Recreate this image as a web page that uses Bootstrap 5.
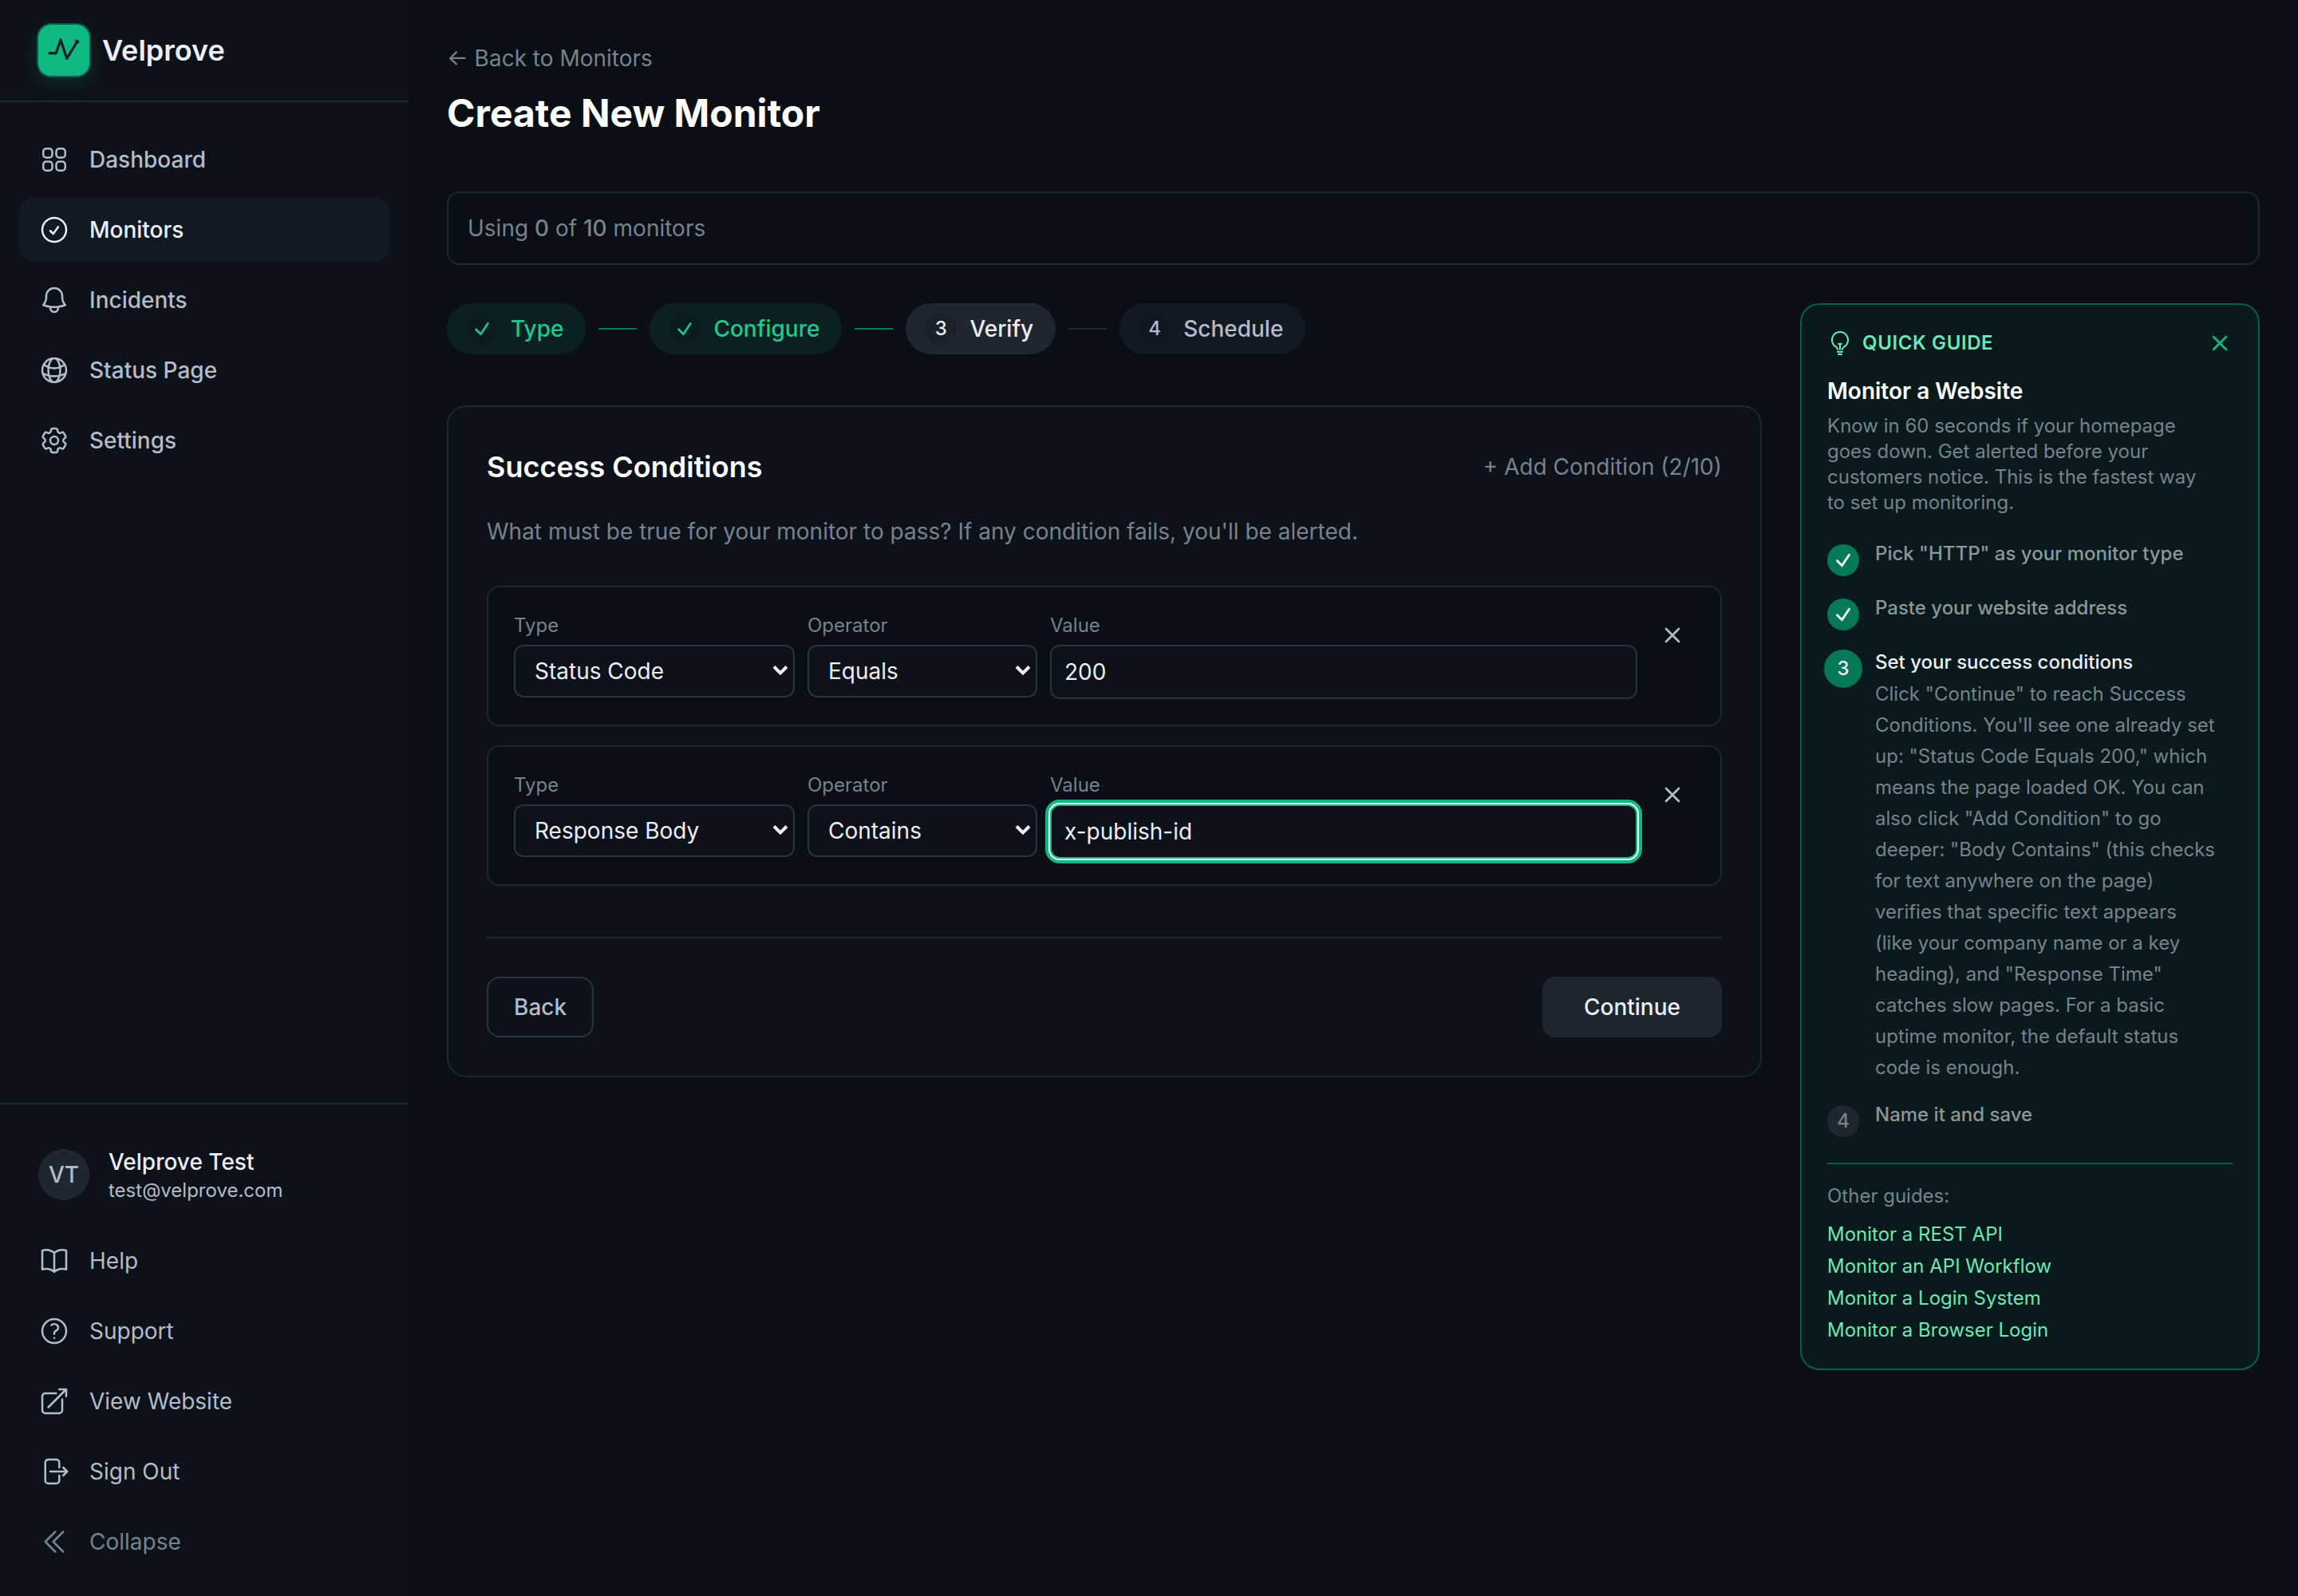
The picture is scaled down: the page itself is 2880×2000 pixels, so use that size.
<!DOCTYPE html>
<html lang="en" data-bs-theme="dark">
<head>
<meta charset="utf-8">
<meta name="viewport" content="width=device-width, initial-scale=1">
<title>Create New Monitor – Velprove</title>
<link href="https://cdn.jsdelivr.net/npm/bootstrap@5.3.0/dist/css/bootstrap.min.css" rel="stylesheet">
<style>
:root{
  --page:#0a0e15; --panel:#0d1119; --raised:#121922; --solid:#1e262f;
  --line:#1e262f; --line-strong:#2a333e;
  --ink:#eceef8; --ink-2:#b4bcc9; --ink-3:#77828f;
  --green:#10b981; --green-soft:#6ee7b7; --green-deep:#047857; --green-line:#065f46;
}
body{background:var(--page);color:var(--ink);font-family:Inter,"Liberation Sans",sans-serif;font-size:28px;line-height:40px}
a{text-decoration:none}
svg{flex:none;display:block}
.ico{fill:none;stroke:currentColor;stroke-width:1.5;stroke-linecap:round;stroke-linejoin:round;width:40px;height:40px}
.ico-sm{width:32px;height:32px}
.ico-x{stroke-width:2}
.ico-check{width:24px;height:24px;stroke-width:2.5}
.txt-sm{font-size:24px;line-height:32px}
.w-mid{font-weight:500}
.ink-2{color:var(--ink-2)} .ink-3{color:var(--ink-3)}

.sidebar{width:512px;flex:none;background:var(--panel)}
.brand{height:128px;padding:0 48px;gap:16px;border-bottom:2px solid var(--line);font-size:36px;font-weight:600;color:var(--ink)}
.brand-logo{width:64px;height:64px;border-radius:16px;background:var(--green);color:#0b2423;box-shadow:0 0 0 2px rgba(16,185,129,.4),0 8px 24px rgba(16,185,129,.2)}
.side-nav{padding:32px 24px;gap:8px}
.side-nav .nav-link,.side-foot .nav-link{height:80px;padding:0 24px;gap:24px;border-radius:16px;color:var(--ink-2);font-weight:500}
.side-nav .nav-link.active{background:var(--raised);color:var(--ink)}
.side-foot{padding:52px 24px 28px;border-top:2px solid var(--line)}
.side-foot .nav-link{font-weight:400}
.side-foot .nav-link.ink-3{color:var(--ink-3)}
.side-user{padding:0 24px 32px;gap:24px}
.avatar{width:64px;height:64px;background:var(--solid)}

.page-main{padding:48px}
.back-line{font-size:32px;line-height:48px}
.back-line a{font-size:28px;line-height:40px}
h1{font-size:48px;line-height:60px;font-weight:700;margin:16px 0 68px}
.usage{border:2px solid var(--line);border-radius:16px;padding:24px;margin-bottom:48px}
.columns{gap:48px}
.steps{gap:16px;margin-bottom:64px}
.step{height:64px;padding:0 28px 0 24px;gap:16px;font-weight:500;background:var(--raised);color:var(--ink-2)}
.step.done{background:#0b2022;color:#1ccb8c}
.step.now{background:var(--solid);color:var(--ink)}
.step-dot{width:40px;height:40px;background:rgba(10,14,20,.2);font-size:24px}
.step-line{width:48px;height:2px;background:var(--line)}
.step-line.done{background:var(--green-deep)}

.panel{background:var(--panel);border:2px solid var(--line);border-radius:24px;padding:48px}
.panel-head{margin-bottom:34px}
.panel-head .btn{font-size:28px;line-height:40px}
.panel h2{font-size:36px;line-height:54px;font-weight:600;margin:0}
.cond{background:var(--page);border:2px solid var(--line);border-radius:16px;padding:32px;gap:16px}
.cond label{display:block;margin-bottom:8px;color:var(--ink-3)}
.cond .form-select,.cond .form-control{background-color:var(--panel);border:2px solid var(--line-strong);border-radius:12px;color:var(--ink);font-size:28px;line-height:40px}
.cond .form-select{height:66px;padding:0 56px 0 24px;background-position:right 6px center;background-size:20px 20px;
  background-image:url("data:image/svg+xml,%3Csvg xmlns='http://www.w3.org/2000/svg' viewBox='0 0 20 20'%3E%3Cpath d='M2 4.5l8 8 8-8' fill='none' stroke='%23eceef8' stroke-width='4'/%3E%3C/svg%3E")}
.cond .form-control{height:68px;padding:0 16px}
.cond .form-control.focused,.cond .form-control:focus{border-color:var(--green);box-shadow:0 0 0 2px #ecfdf5,0 0 0 6px var(--green)}
.f-type{width:352px}.f-op{width:288px}
.icon-btn{width:56px;height:56px;padding:12px;border:0;color:var(--ink-2)}
.panel-foot{border-top:2px solid var(--line);margin-top:64px;padding-top:48px}
.panel-foot .btn{height:76px;border-radius:16px;border:2px solid var(--line-strong);padding:0 32px;font-size:28px;font-weight:500;color:var(--ink-2)}
.panel-foot .btn-go{background:var(--solid);border:0;padding:0 52px;color:var(--ink)}

.guide{width:576px;flex:none;background:#081a1c;border:2px solid var(--green-line);border-radius:24px;padding:32px}
.guide h3{font-size:28px;line-height:40px;font-weight:600;margin:24px 0 8px}
.guide-tag{gap:12px;color:var(--green-soft);font-weight:600;letter-spacing:.6px}
.guide-close{color:var(--green)}
.guide-intro{padding-right:24px}
.guide ol{gap:24px;margin:32px 0}
.guide li{gap:20px}
.guide-dot{width:40px;height:40px;margin-top:4px;background:var(--green-deep);color:var(--ink);font-weight:500}
.guide-dot .ico-check{stroke-width:3}
.guide-dot.now-dot{transform:scale(1.2);font-size:20px}
.guide-dot.todo{background:var(--solid);color:var(--ink-3)}
.guide-name{font-weight:500;color:#8d9699}
.guide-name.current{color:var(--ink)}
.guide-text{line-height:39px;margin-top:4px;padding-right:16px}
.guide-more{border-top:2px solid var(--green-line);padding-top:24px}
.guide-more a{color:var(--green-soft)}
</style>
</head>
<body>
<div class="d-flex min-vh-100">
  <aside class="sidebar d-flex flex-column">
    <a href="#" class="brand d-flex align-items-center">
      <span class="brand-logo d-flex align-items-center justify-content-center">
        <svg width="64" height="64" viewBox="0 0 64 64" fill="none" stroke="currentColor" stroke-width="3.2" stroke-linecap="round" stroke-linejoin="round"><path d="M14 35.700h8.300l5.700-17 7.700 23.600 12.800-20.800"/><circle cx="48.500" cy="21.300" r="1" fill="currentColor"/></svg>
      </span>
      Velprove
    </a>
    <nav class="side-nav nav flex-column">
      <a href="#" class="nav-link d-flex align-items-center"><svg class="ico" viewBox="0 0 24 24"><path d="M3.750 6A2.250 2.250 0 0 1 6 3.750h2.250A2.250 2.250 0 0 1 10.500 6v2.250a2.250 2.250 0 0 1-2.250 2.250H6a2.250 2.250 0 0 1-2.250-2.250V6ZM3.750 15.750A2.250 2.250 0 0 1 6 13.500h2.250a2.250 2.250 0 0 1 2.250 2.250V18a2.250 2.250 0 0 1-2.250 2.250H6A2.250 2.250 0 0 1 3.750 18v-2.250ZM13.500 6a2.250 2.250 0 0 1 2.250-2.250H18A2.250 2.250 0 0 1 20.250 6v2.250A2.250 2.250 0 0 1 18 10.500h-2.250a2.250 2.250 0 0 1-2.250-2.250V6ZM13.500 15.750a2.250 2.250 0 0 1 2.250-2.250H18a2.250 2.250 0 0 1 2.250 2.250V18A2.250 2.250 0 0 1 18 20.250h-2.250A2.250 2.250 0 0 1 13.500 18v-2.250Z"/></svg>Dashboard</a>
      <a href="#" class="nav-link active d-flex align-items-center" aria-current="page"><svg class="ico" viewBox="0 0 24 24"><path d="M9 12.750 11.250 15 15 9.750M21 12a9 9 0 1 1-18 0 9 9 0 0 1 18 0Z"/></svg>Monitors</a>
      <a href="#" class="nav-link d-flex align-items-center"><svg class="ico" viewBox="0 0 24 24"><path d="M14.857 17.082a23.848 23.848 0 0 0 5.454-1.310A8.967 8.967 0 0 1 18 9.750V9A6 6 0 0 0 6 9v.750a8.967 8.967 0 0 1-2.312 6.022c1.733.640 3.560 1.085 5.455 1.310m5.714 0a24.255 24.255 0 0 1-5.714 0m5.714 0a3 3 0 1 1-5.714 0"/></svg>Incidents</a>
      <a href="#" class="nav-link d-flex align-items-center"><svg class="ico" viewBox="0 0 24 24"><path d="M12 21a9.004 9.004 0 0 0 8.716-6.747M12 21a9.004 9.004 0 0 1-8.716-6.747M12 21c2.485 0 4.500-4.030 4.500-9S14.485 3 12 3m0 18c-2.485 0-4.500-4.030-4.500-9S9.515 3 12 3m0 0a8.997 8.997 0 0 1 7.843 4.582M12 3a8.997 8.997 0 0 0-7.843 4.582m15.686 0A11.953 11.953 0 0 1 12 10.500c-2.998 0-5.740-1.100-7.843-2.918m15.686 0A8.959 8.959 0 0 1 21 12c0 .778-.099 1.533-.284 2.253m0 0A17.919 17.919 0 0 1 12 16.500c-3.162 0-6.133-.815-8.716-2.247m0 0A9.015 9.015 0 0 1 3 12c0-1.605.420-3.113 1.157-4.418"/></svg>Status Page</a>
      <a href="#" class="nav-link d-flex align-items-center"><svg class="ico" viewBox="0 0 24 24"><path d="M9.594 3.940c.090-.542.560-.940 1.110-.940h2.593c.550 0 1.020.398 1.110.940l.213 1.281c.063.374.313.686.645.870.074.040.147.083.220.127.325.196.720.257 1.075.124l1.217-.456a1.125 1.125 0 0 1 1.370.490l1.296 2.247a1.125 1.125 0 0 1-.260 1.431l-1.003.827c-.293.241-.438.613-.430.992a7.723 7.723 0 0 1 0 .255c-.008.378.137.750.430.991l1.004.827c.424.350.534.955.260 1.430l-1.298 2.247a1.125 1.125 0 0 1-1.369.491l-1.217-.456c-.355-.133-.750-.072-1.076.124a6.470 6.470 0 0 1-.220.128c-.331.183-.581.495-.644.869l-.213 1.281c-.090.543-.560.940-1.110.940h-2.594c-.550 0-1.019-.398-1.110-.940l-.213-1.281c-.062-.374-.312-.686-.644-.870a6.520 6.520 0 0 1-.220-.127c-.325-.196-.720-.257-1.076-.124l-1.217.456a1.125 1.125 0 0 1-1.369-.490l-1.297-2.247a1.125 1.125 0 0 1 .260-1.431l1.004-.827c.292-.240.437-.613.430-.991a6.932 6.932 0 0 1 0-.255c.007-.380-.138-.751-.430-.992l-1.004-.827a1.125 1.125 0 0 1-.260-1.430l1.297-2.247a1.125 1.125 0 0 1 1.370-.491l1.216.456c.356.133.751.072 1.076-.124.072-.044.146-.086.220-.128.332-.183.582-.495.644-.869l.214-1.280Z"/><path d="M15 12a3 3 0 1 1-6 0 3 3 0 0 1 6 0Z"/></svg>Settings</a>
    </nav>
    <div class="side-foot mt-auto">
      <div class="side-user d-flex align-items-center">
        <span class="avatar rounded-circle d-flex align-items-center justify-content-center w-mid ink-2">VT</span>
        <div><div class="w-mid">Velprove Test</div><div class="txt-sm ink-2">test@velprove.com</div></div>
      </div>
      <nav class="nav flex-column gap-2">
        <a href="#" class="nav-link d-flex align-items-center"><svg class="ico" viewBox="0 0 24 24"><path d="M12 6.042A8.967 8.967 0 0 0 6 3.750c-1.052 0-2.062.180-3 .512v14.250A8.987 8.987 0 0 1 6 18c2.305 0 4.408.867 6 2.292m0-14.250a8.966 8.966 0 0 1 6-2.292c1.052 0 2.062.180 3 .512v14.250A8.987 8.987 0 0 0 18 18a8.967 8.967 0 0 0-6 2.292m0-14.250v14.250"/></svg>Help</a>
        <a href="#" class="nav-link d-flex align-items-center"><svg class="ico" viewBox="0 0 24 24"><path d="M9.879 7.519c1.171-1.025 3.071-1.025 4.242 0 1.172 1.025 1.172 2.687 0 3.712-.203.179-.430.326-.670.442-.745.361-1.450.999-1.450 1.827v.750M21 12a9 9 0 1 1-18 0 9 9 0 0 1 18 0Zm-9 5.250h.008v.008H12v-.008Z"/></svg>Support</a>
        <a href="#" class="nav-link d-flex align-items-center"><svg class="ico" viewBox="0 0 24 24"><path d="M13.500 6H5.250A2.250 2.250 0 0 0 3 8.250v10.500A2.250 2.250 0 0 0 5.250 21h10.500A2.250 2.250 0 0 0 18 18.750V10.500m-10.500 6L21 3m0 0h-5.250M21 3v5.250"/></svg>View Website</a>
        <a href="#" class="nav-link d-flex align-items-center"><svg class="ico" viewBox="0 0 24 24"><path d="M15.750 9V5.250A2.250 2.250 0 0 0 13.500 3h-6a2.250 2.250 0 0 0-2.250 2.250v13.500A2.250 2.250 0 0 0 7.500 21h6a2.250 2.250 0 0 0 2.250-2.250V15m3 0 3-3m0 0-3-3m3 3H9"/></svg>Sign Out</a>
        <a href="#" class="nav-link ink-3 d-flex align-items-center"><svg class="ico" viewBox="0 0 24 24"><path d="m18.750 4.500-7.500 7.500 7.500 7.500m-6-15L5.250 12l7.500 7.500"/></svg>Collapse</a>
      </nav>
    </div>
  </aside>

  <main class="page-main flex-grow-1">
    <div class="back-line"><a href="#" class="ink-3">← Back to Monitors</a></div>
    <h1>Create New Monitor</h1>
    <div class="usage ink-3">Using <span class="w-mid">0</span> of <span class="w-mid">10</span> monitors</div>

    <div class="columns d-flex align-items-start">
      <div class="flex-grow-1">
        <div class="steps d-flex align-items-center">
          <div class="step done rounded-pill d-flex align-items-center"><span class="step-dot rounded-circle d-flex align-items-center justify-content-center"><svg class="ico ico-check" viewBox="0 0 24 24"><path d="m4.500 12.750 6 6 9-13.500"/></svg></span>Type</div>
          <span class="step-line done"></span>
          <div class="step done rounded-pill d-flex align-items-center"><span class="step-dot rounded-circle d-flex align-items-center justify-content-center"><svg class="ico ico-check" viewBox="0 0 24 24"><path d="m4.500 12.750 6 6 9-13.500"/></svg></span>Configure</div>
          <span class="step-line done"></span>
          <div class="step now rounded-pill d-flex align-items-center"><span class="step-dot rounded-circle d-flex align-items-center justify-content-center">3</span>Verify</div>
          <span class="step-line"></span>
          <div class="step rounded-pill d-flex align-items-center"><span class="step-dot rounded-circle d-flex align-items-center justify-content-center">4</span>Schedule</div>
        </div>

        <section class="panel">
          <div class="panel-head d-flex align-items-center justify-content-between">
            <h2>Success Conditions</h2>
            <button type="button" class="btn p-0 border-0 ink-3">+ Add Condition (2/10)</button>
          </div>
          <p class="ink-3 mb-5">What must be true for your monitor to pass? If any condition fails, you'll be alerted.</p>
          <div class="d-flex flex-column gap-4">
            <div class="cond d-flex align-items-start">
              <div class="f-type"><label class="txt-sm" for="type1">Type</label><select id="type1" class="form-select"><option>Status Code</option></select></div>
              <div class="f-op"><label class="txt-sm" for="op1">Operator</label><select id="op1" class="form-select"><option>Equals</option></select></div>
              <div class="flex-grow-1"><label class="txt-sm" for="val1">Value</label><input id="val1" type="text" class="form-control" value="200"></div>
              <button type="button" class="btn icon-btn" aria-label="Remove condition"><svg class="ico ico-sm ico-x" viewBox="0 0 24 24"><path d="M6 18 18 6M6 6l12 12"/></svg></button>
            </div>
            <div class="cond d-flex align-items-start">
              <div class="f-type"><label class="txt-sm" for="type2">Type</label><select id="type2" class="form-select"><option>Response Body</option></select></div>
              <div class="f-op"><label class="txt-sm" for="op2">Operator</label><select id="op2" class="form-select"><option>Contains</option></select></div>
              <div class="flex-grow-1"><label class="txt-sm" for="val2">Value</label><input id="val2" type="text" class="form-control focused" value="x-publish-id"></div>
              <button type="button" class="btn icon-btn" aria-label="Remove condition"><svg class="ico ico-sm ico-x" viewBox="0 0 24 24"><path d="M6 18 18 6M6 6l12 12"/></svg></button>
            </div>
          </div>
          <div class="panel-foot d-flex justify-content-between">
            <button type="button" class="btn">Back</button>
            <button type="button" class="btn btn-go">Continue</button>
          </div>
        </section>
      </div>

      <aside class="guide txt-sm">
        <div class="d-flex align-items-center justify-content-between">
          <div class="guide-tag d-flex align-items-center"><svg class="ico ico-sm" viewBox="0 0 24 24"><path d="M12 18v-5.250m0 0a6.010 6.010 0 0 0 1.500-.189m-1.500.189a6.010 6.010 0 0 1-1.500-.189m3.750 7.478a12.060 12.060 0 0 1-4.500 0m3.750 2.383a14.406 14.406 0 0 1-3 0M14.250 18v-.192c0-.983.658-1.823 1.508-2.316a7.500 7.500 0 1 0-7.517 0c.850.493 1.509 1.333 1.509 2.316V18"/></svg>QUICK GUIDE</div>
          <button type="button" class="btn guide-close p-0 border-0" aria-label="Close guide"><svg class="ico ico-sm ico-x" viewBox="0 0 24 24"><path d="M6 18 18 6M6 6l12 12"/></svg></button>
        </div>
        <h3>Monitor a Website</h3>
        <p class="guide-intro ink-3 m-0">Know in 60 seconds if your homepage goes down. Get alerted before your customers notice. This is the fastest way to set up monitoring.</p>
        <ol class="list-unstyled d-flex flex-column">
          <li class="d-flex align-items-start"><span class="guide-dot flex-shrink-0 rounded-circle d-flex align-items-center justify-content-center"><svg class="ico ico-check" viewBox="0 0 24 24"><path d="m4.500 12.750 6 6 9-13.500"/></svg></span><div class="guide-name">Pick "HTTP" as your monitor type</div></li>
          <li class="d-flex align-items-start"><span class="guide-dot flex-shrink-0 rounded-circle d-flex align-items-center justify-content-center"><svg class="ico ico-check" viewBox="0 0 24 24"><path d="m4.500 12.750 6 6 9-13.500"/></svg></span><div class="guide-name">Paste your website address</div></li>
          <li class="d-flex align-items-start"><span class="guide-dot now-dot flex-shrink-0 rounded-circle d-flex align-items-center justify-content-center">3</span><div><div class="guide-name current">Set your success conditions</div><div class="guide-text ink-3">Click "Continue" to reach Success Conditions. You'll see one already set up: "Status Code Equals 200," which means the page loaded OK. You can also click "Add Condition" to go deeper: "Body Contains" (this checks for text anywhere on the page) verifies that specific text appears (like&nbsp;your company name or a key heading), and "Response Time" catches slow pages. For a basic uptime monitor, the default status code is enough.</div></div></li>
          <li class="d-flex align-items-start"><span class="guide-dot todo flex-shrink-0 rounded-circle d-flex align-items-center justify-content-center">4</span><div class="guide-name">Name it and save</div></li>
        </ol>
        <div class="guide-more">
          <div class="ink-3 mb-3">Other guides:</div>
          <div class="d-flex flex-column align-items-start gap-2">
            <a href="#">Monitor a REST API</a>
            <a href="#">Monitor an API Workflow</a>
            <a href="#">Monitor a Login System</a>
            <a href="#">Monitor a Browser Login</a>
          </div>
        </div>
      </aside>
    </div>
  </main>
</div>
<script src="https://cdn.jsdelivr.net/npm/bootstrap@5.3.0/dist/js/bootstrap.bundle.min.js"></script>
</body>
</html>
